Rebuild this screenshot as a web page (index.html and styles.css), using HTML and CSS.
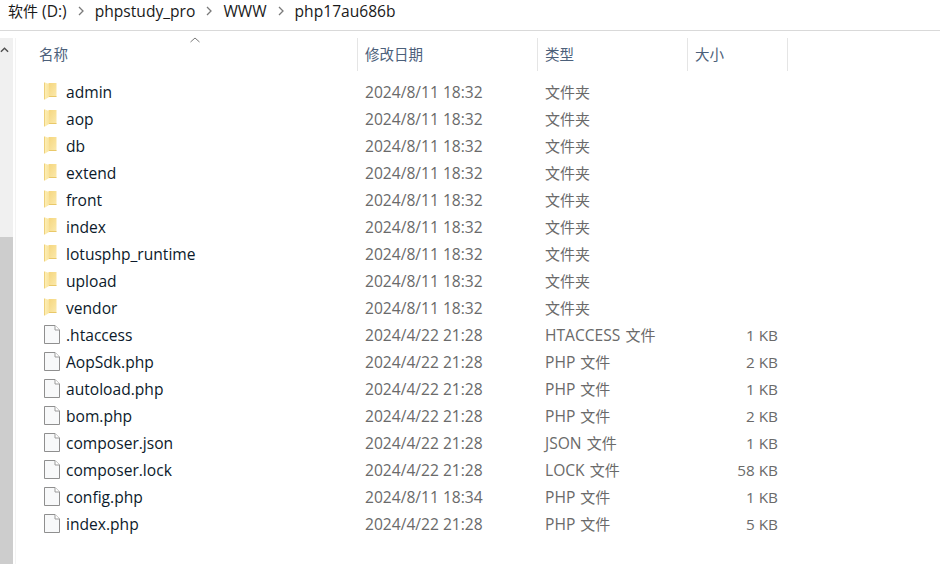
FILE: index.html
```html
<!DOCTYPE html>
<html lang="zh-CN">
<head>
<meta charset="utf-8">
<title>php17au686b</title>
<link rel="stylesheet" href="styles.css">
</head>
<body>
<svg class="defs" width="0" height="0" aria-hidden="true">
  <defs>
    <linearGradient id="fg" x1="0" y1="0" x2="1" y2="0">
      <stop offset="0" stop-color="#fdeeb4"/>
      <stop offset="1" stop-color="#f9e39c"/>
    </linearGradient>
    <linearGradient id="bg" x1="0" y1="0" x2="1" y2="1">
      <stop offset="0" stop-color="#f5d67e"/>
      <stop offset="1" stop-color="#fbe9ac"/>
    </linearGradient>
    <symbol id="folder" viewBox="0 0 13 18">
      <path d="M4.5 1h8v13.5h-8z" fill="url(#bg)"/>
      <path d="M1 0.5l4 1.5v13l-4 2.5z" fill="url(#fg)"/>
      <path d="M0.5 0.5v17" stroke="#eed07a" stroke-width="1" fill="none"/>
      <path d="M5 14.5h7.5" stroke="#e9c869" stroke-width="1"/>
    </symbol>
    <symbol id="file" viewBox="0 0 16 19">
      <path d="M0.5 0.5h10.5l4.5 4.5v13.5h-15z" fill="#f8f9fa" stroke="#8f8f8f"/>
      <path d="M11 0.5v4.5h4.5" fill="#fff" stroke="#9b9b9b"/>
    </symbol>
  </defs>
</svg>
<nav class="crumbs">
  <span><span class="cjk">软件</span> (D:)</span><svg class="chev" viewBox="0 0 6 10"><path d="M1 1l4 4-4 4"/></svg>
  <span>phpstudy_pro</span><svg class="chev" viewBox="0 0 6 10"><path d="M1 1l4 4-4 4"/></svg>
  <span>WWW</span><svg class="chev" viewBox="0 0 6 10"><path d="M1 1l4 4-4 4"/></svg>
  <span>php17au686b</span>
</nav>
<main class="pane">
  <aside class="scrollbar">
    <svg class="up" viewBox="0 0 10 6"><path d="M1 5l4-4 4 4"/></svg>
    <div class="thumb"></div>
  </aside>
  <section class="list">
    <header class="head">
      <div class="hc name">名称<svg class="sort" viewBox="0 0 10 6"><path d="M0.5 5l4.5-4 4.5 4"/></svg></div>
      <div class="hc">修改日期</div>
      <div class="hc">类型</div>
      <div class="hc">大小</div>
    </header>
    <div class="rows">
      <div class="row"><svg class="ic folder"><use href="#folder"/></svg><span class="n">admin</span><span class="d">2024/8/11 18:32</span><span class="t cjk">文件夹</span><span class="s"></span></div>
      <div class="row"><svg class="ic folder"><use href="#folder"/></svg><span class="n">aop</span><span class="d">2024/8/11 18:32</span><span class="t cjk">文件夹</span><span class="s"></span></div>
      <div class="row"><svg class="ic folder"><use href="#folder"/></svg><span class="n">db</span><span class="d">2024/8/11 18:32</span><span class="t cjk">文件夹</span><span class="s"></span></div>
      <div class="row"><svg class="ic folder"><use href="#folder"/></svg><span class="n">extend</span><span class="d">2024/8/11 18:32</span><span class="t cjk">文件夹</span><span class="s"></span></div>
      <div class="row"><svg class="ic folder"><use href="#folder"/></svg><span class="n">front</span><span class="d">2024/8/11 18:32</span><span class="t cjk">文件夹</span><span class="s"></span></div>
      <div class="row"><svg class="ic folder"><use href="#folder"/></svg><span class="n">index</span><span class="d">2024/8/11 18:32</span><span class="t cjk">文件夹</span><span class="s"></span></div>
      <div class="row"><svg class="ic folder"><use href="#folder"/></svg><span class="n">lotusphp_runtime</span><span class="d">2024/8/11 18:32</span><span class="t cjk">文件夹</span><span class="s"></span></div>
      <div class="row"><svg class="ic folder"><use href="#folder"/></svg><span class="n">upload</span><span class="d">2024/8/11 18:32</span><span class="t cjk">文件夹</span><span class="s"></span></div>
      <div class="row"><svg class="ic folder"><use href="#folder"/></svg><span class="n">vendor</span><span class="d">2024/8/11 18:32</span><span class="t cjk">文件夹</span><span class="s"></span></div>
      <div class="row"><svg class="ic file"><use href="#file"/></svg><span class="n">.htaccess</span><span class="d">2024/4/22 21:28</span><span class="t">HTACCESS <span class="cjk">文件</span></span><span class="s">1 KB</span></div>
      <div class="row"><svg class="ic file"><use href="#file"/></svg><span class="n">AopSdk.php</span><span class="d">2024/4/22 21:28</span><span class="t">PHP <span class="cjk">文件</span></span><span class="s">2 KB</span></div>
      <div class="row"><svg class="ic file"><use href="#file"/></svg><span class="n">autoload.php</span><span class="d">2024/4/22 21:28</span><span class="t">PHP <span class="cjk">文件</span></span><span class="s">1 KB</span></div>
      <div class="row"><svg class="ic file"><use href="#file"/></svg><span class="n">bom.php</span><span class="d">2024/4/22 21:28</span><span class="t">PHP <span class="cjk">文件</span></span><span class="s">2 KB</span></div>
      <div class="row"><svg class="ic file"><use href="#file"/></svg><span class="n">composer.json</span><span class="d">2024/4/22 21:28</span><span class="t">JSON <span class="cjk">文件</span></span><span class="s">1 KB</span></div>
      <div class="row"><svg class="ic file"><use href="#file"/></svg><span class="n">composer.lock</span><span class="d">2024/4/22 21:28</span><span class="t">LOCK <span class="cjk">文件</span></span><span class="s">58 KB</span></div>
      <div class="row"><svg class="ic file"><use href="#file"/></svg><span class="n">config.php</span><span class="d">2024/8/11 18:34</span><span class="t">PHP <span class="cjk">文件</span></span><span class="s">1 KB</span></div>
      <div class="row"><svg class="ic file"><use href="#file"/></svg><span class="n">index.php</span><span class="d">2024/4/22 21:28</span><span class="t">PHP <span class="cjk">文件</span></span><span class="s">5 KB</span></div>
    </div>
  </section>
</main>
</body>
</html>
```
FILE: styles.css
```css
* { box-sizing: border-box; }
html, body { margin: 0; height: 100%; }
body {
  width: 940px;
  height: 564px;
  overflow: hidden;
  background: #fff;
  font-family: "Open Sans", "Noto Sans CJK SC", sans-serif;
  font-size: 15.6px;
  color: #000;
  display: flex;
  flex-direction: column;
}
.defs { position: absolute; }
.crumbs {
  height: 31px;
  flex: none;
  border-bottom: 1px solid #d9d9d9;
  display: flex;
  align-items: center;
  padding: 0 0 9px 8px;
  color: #1a1a1a;
}
.chev { width: 6px; height: 10px; margin: 0 11px 0 11px; fill: none; stroke: #7a7a7a; stroke-width: 1.3; }
.pane { flex: 1; display: flex; padding-top: 7px; min-height: 0; }
.scrollbar {
  width: 13px;
  flex: none;
  background: #f0f0f0;
  display: flex;
  flex-direction: column;
  justify-content: space-between;
}
.up { width: 9px; height: 6px; margin: 9px 0 0 0; fill: none; stroke: #505050; stroke-width: 1.6; }
.thumb { height: 327px; background: #cdcdcd; }
.list { flex: 1; border-left: 1px solid #f3f3f3; margin-left: 2px; min-width: 0; }
.head {
  height: 33px;
  display: grid;
  grid-template-columns: 342px 180px 150px 100px;
}
.hc {
  padding: 0 0 2px 7px;
  display: flex;
  align-items: center;
  color: #4c607a;
  border-right: 1px solid #e5e5e5;
  font-size: 14.5px;
  position: relative;
}
.hc.name { padding-left: 23px; }
.sort {
  position: absolute;
  left: 174px;
  top: -1px;
  width: 10px;
  height: 6px;
  fill: none;
  stroke: #7a7a7a;
}
.rows { padding-top: 7px; }
.row {
  height: 27px;
  display: grid;
  grid-template-columns: 342px 180px 150px 90px;
  align-items: center;
  position: relative;
}
.ic { position: absolute; left: 28px; top: 4px; width: 13px; height: 18px; }
.ic.file { width: 16px; height: 19px; }
.n { padding-left: 50px; color: #0c1a2b; white-space: nowrap; }
.d { padding-left: 7px; color: #6a6a6a; white-space: nowrap; }
.t { padding-left: 7px; color: #6a6a6a; white-space: nowrap; }
.s { text-align: right; color: #6a6a6a; white-space: nowrap; font-size: 15.3px; }
.cjk { font-size: 15px; }
.t span.cjk { margin-left: 1px; }
```
